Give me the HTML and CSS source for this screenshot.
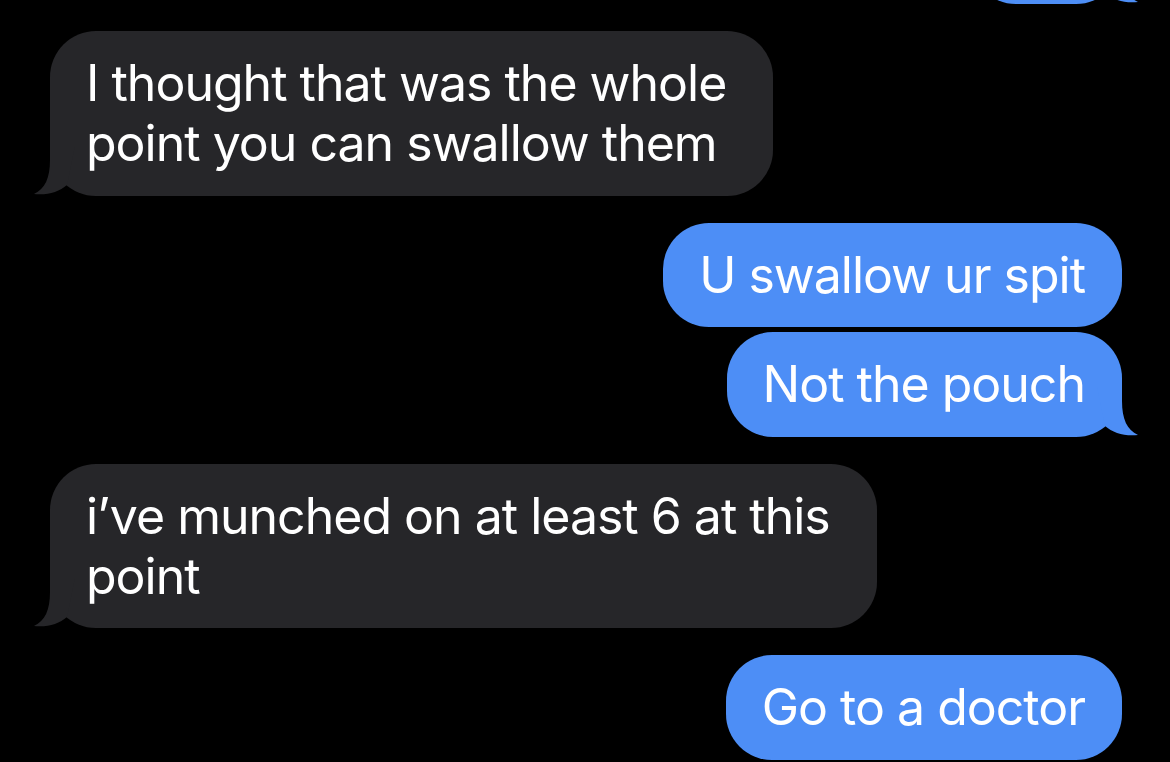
FILE: index.html
```html
<!DOCTYPE html>
<html lang="en">
<head>
<meta charset="utf-8">
<title>Messages</title>
<link rel="stylesheet" href="styles.css">
</head>
<body>
<main class="thread">
  <div class="msg sent partial">
    <svg class="tail" viewBox="0 0 50 50"><path d="M17,0 L17,14 C17,32 12,43 1,48 C14,49.5 26,46 34,39 L42,0 Z"/></svg>
  </div>
  <div class="msg recv">
    <p class="text">I thought that was the whole<br>point you can swallow them</p>
    <svg class="tail" viewBox="0 0 50 50"><path d="M17,0 L17,14 C17,32 12,43 1,48 C14,49.5 26,46 34,39 L42,0 Z"/></svg>
  </div>
  <div class="msg sent">
    <p class="text">U swallow ur spit</p>
  </div>
  <div class="msg sent cont">
    <p class="text">Not the pouch</p>
    <svg class="tail" viewBox="0 0 50 50"><path d="M17,0 L17,14 C17,32 12,43 1,48 C14,49.5 26,46 34,39 L42,0 Z"/></svg>
  </div>
  <div class="msg recv">
    <p class="text">i’ve munched on at least 6 at this<br>point</p>
    <svg class="tail" viewBox="0 0 50 50"><path d="M17,0 L17,14 C17,32 12,43 1,48 C14,49.5 26,46 34,39 L42,0 Z"/></svg>
  </div>
  <div class="msg sent">
    <p class="text">Go to a doctor</p>
  </div>
</main>
</body>
</html>
```

FILE: styles.css
```css
html, body {
  margin: 0;
  padding: 0;
  background: #000;
  height: 100%;
  overflow: hidden;
}

.thread {
  display: flex;
  flex-direction: column;
  font-family: Inter, "Noto Sans", sans-serif;
}

.msg {
  position: relative;
  box-sizing: border-box;
  margin-top: 27px;
  padding: 22px 37px 22.5px 36px;
  border-radius: 46px;
  color: #fff;
  font-size: 50px;
  line-height: 60px;
  font-weight: 400;
  letter-spacing: -1px;
}

.msg.cont {
  margin-top: 5px;
}

.text {
  margin: 0;
  white-space: nowrap;
}

.recv {
  align-self: flex-start;
  margin-left: 50px;
  padding-right: 47px;
  background: #262629;
}

.sent {
  align-self: flex-end;
  margin-right: 48px;
  background: #4d8ef6;
}

.partial {
  width: 152px;
  height: 104px;
  margin-top: -100px;
}

.tail {
  position: absolute;
  bottom: 0;
  width: 50px;
  height: 50px;
}

.recv .tail {
  left: -17px;
  fill: #262629;
}

.sent .tail {
  right: -17px;
  transform: scaleX(-1);
  fill: #4d8ef6;
}
```
